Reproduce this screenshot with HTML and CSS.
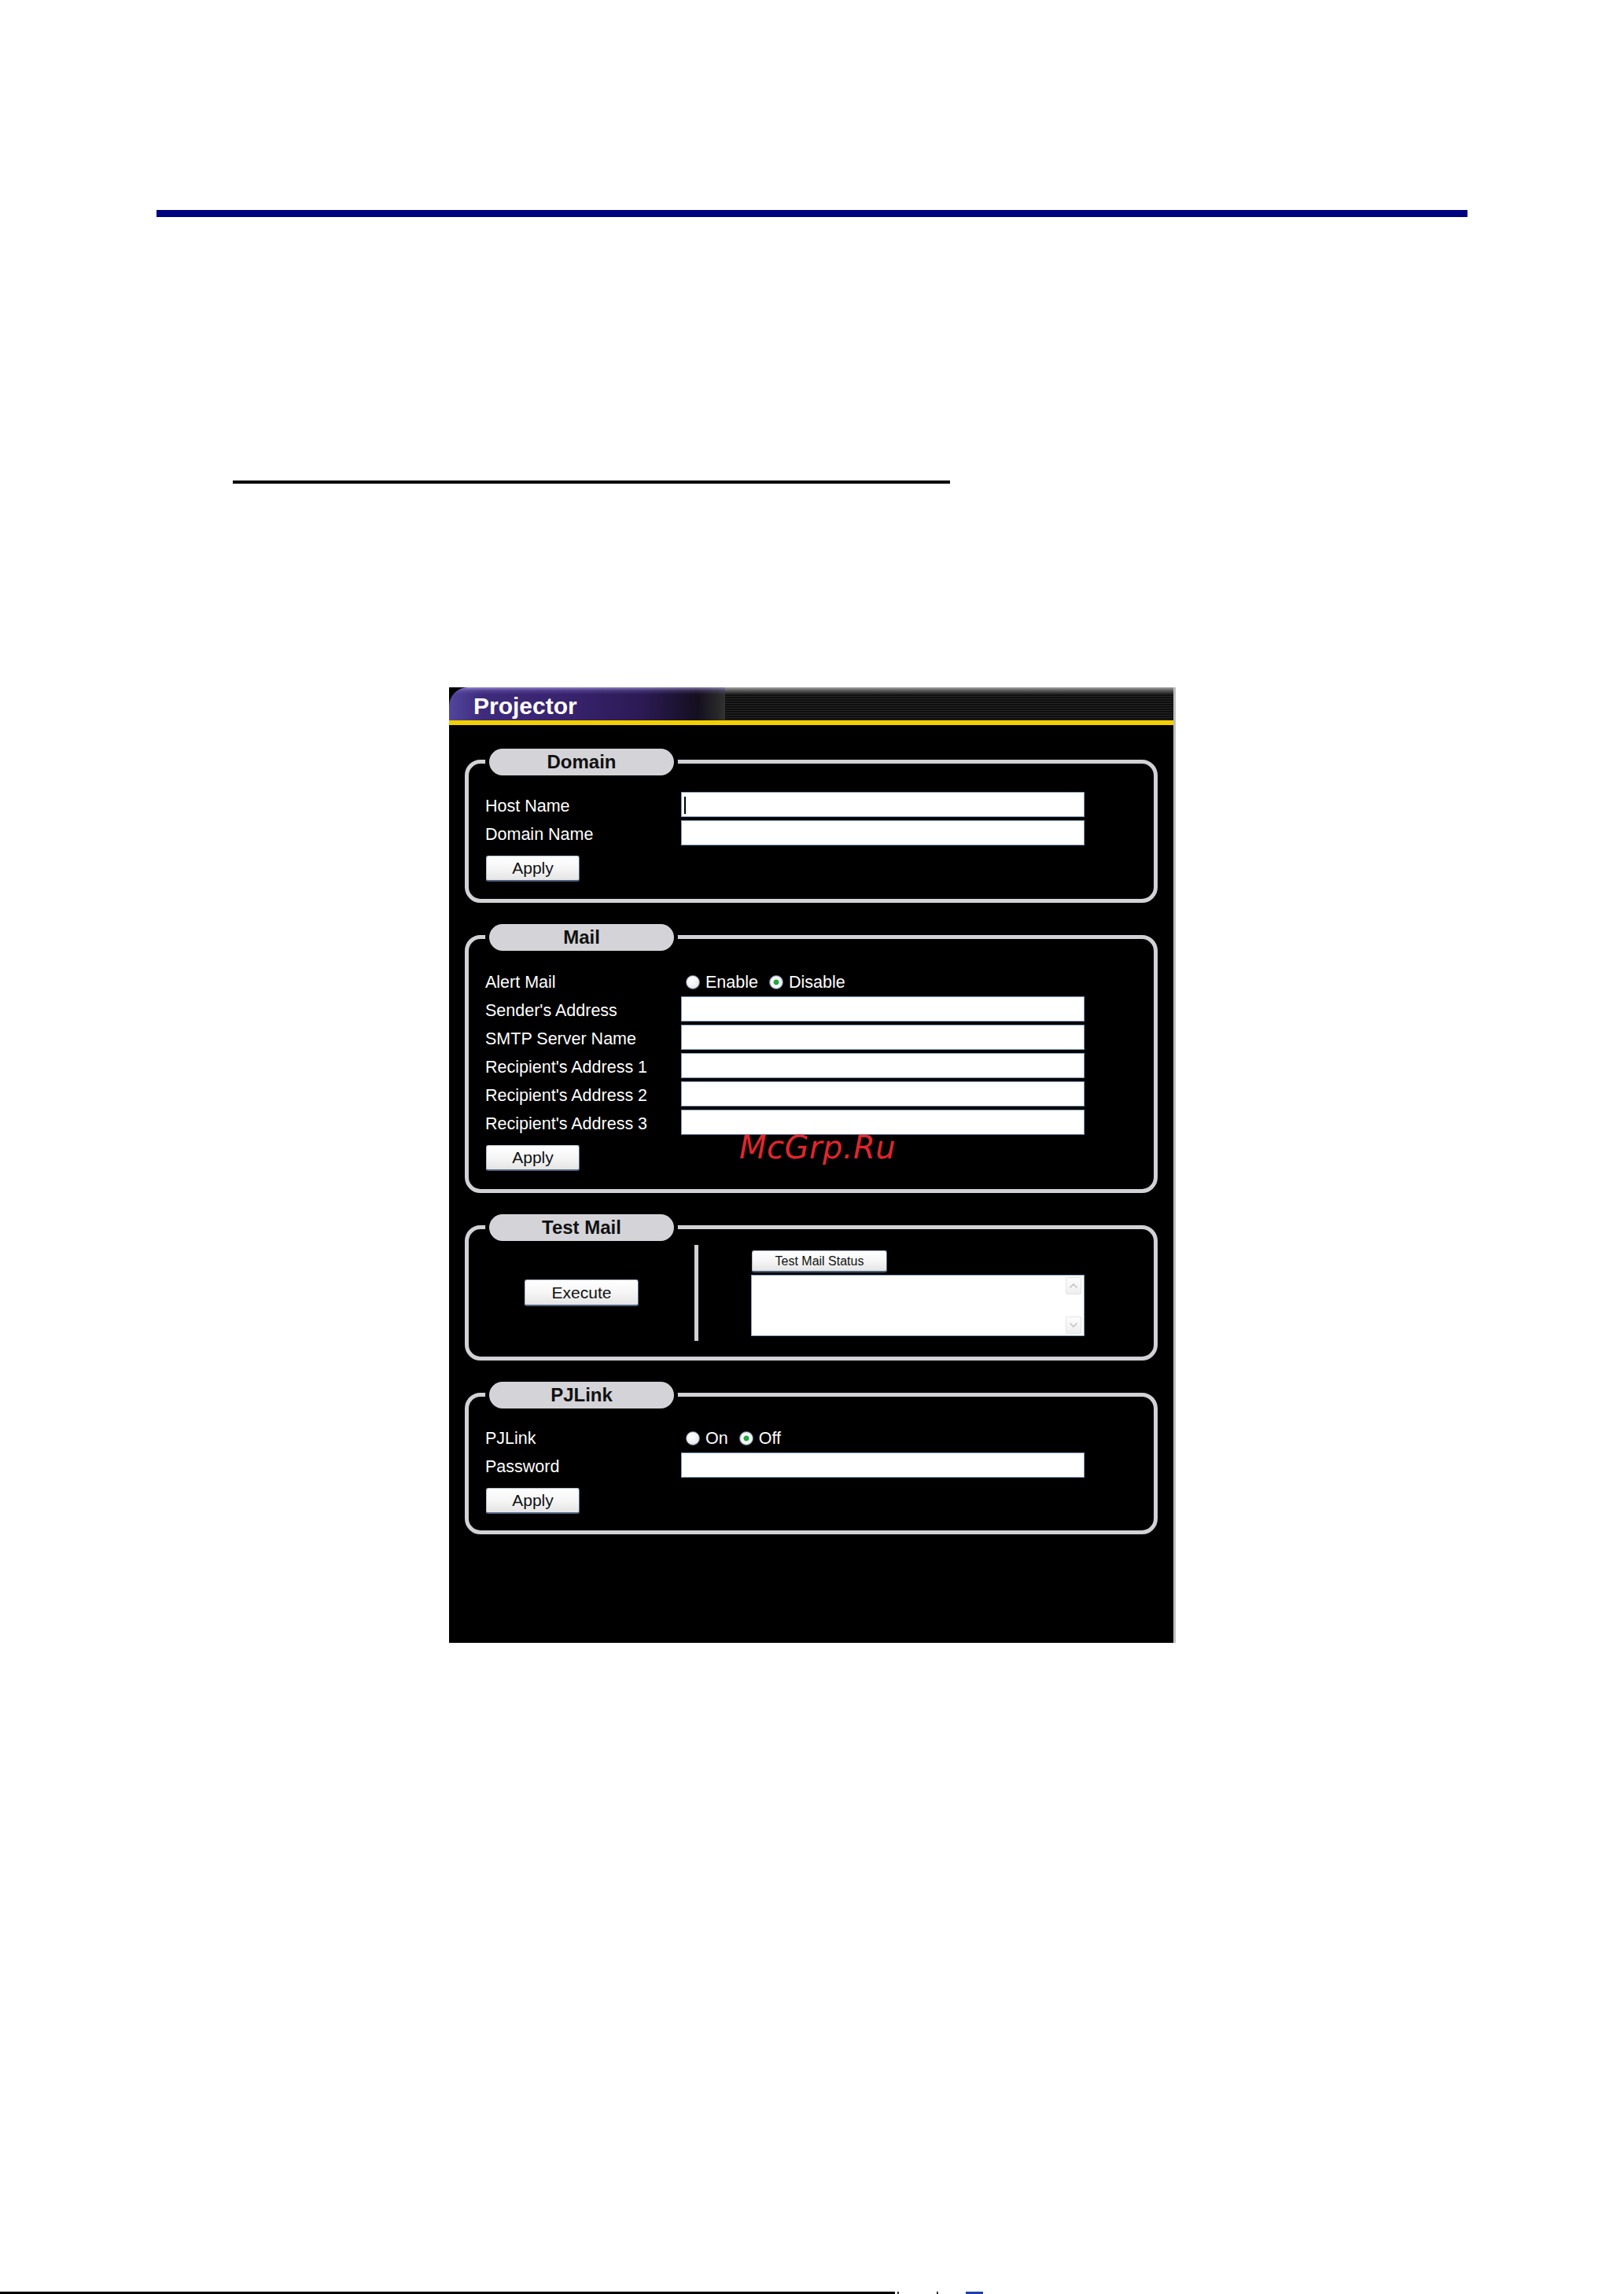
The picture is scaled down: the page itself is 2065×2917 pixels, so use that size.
FILE: index.html
```html
<!DOCTYPE html>
<html lang="en">
<head>
<meta charset="utf-8">
<title>Projector – Network Settings</title>
<link rel="stylesheet" href="styles.css">
</head>
<body>
<div class="page">
  <div class="rule-blue"></div>
  <div class="rule-black"></div>

  <div class="panel">
    <div class="panel-head">
      <div class="head-title">Projector</div>
      <div class="head-stripes"></div>
    </div>
    <div class="head-line"></div>

    <section class="box box-domain">
      <div class="pill">Domain</div>
      <div class="row">
        <label class="lbl">Host Name</label>
        <span class="field-wrap"><input class="field" type="text"><span class="caret"></span></span>
      </div>
      <div class="row">
        <label class="lbl">Domain Name</label>
        <input class="field" type="text">
      </div>
      <button class="btn btn-apply" type="button">Apply</button>
    </section>

    <section class="box box-mail">
      <div class="pill">Mail</div>
      <div class="row">
        <label class="lbl">Alert Mail</label>
        <div class="radios">
          <input class="radio" type="radio" name="alert"><span class="opt">Enable</span>
          <input class="radio" type="radio" name="alert" checked><span class="opt">Disable</span>
        </div>
      </div>
      <div class="row"><label class="lbl">Sender's Address</label><input class="field" type="text"></div>
      <div class="row"><label class="lbl">SMTP Server Name</label><input class="field" type="text"></div>
      <div class="row"><label class="lbl">Recipient's Address 1</label><input class="field" type="text"></div>
      <div class="row"><label class="lbl">Recipient's Address 2</label><input class="field" type="text"></div>
      <div class="row"><label class="lbl">Recipient's Address 3</label><input class="field" type="text"></div>
      <button class="btn btn-apply" type="button">Apply</button>
    </section>

    <section class="box box-test">
      <div class="pill">Test Mail</div>
      <div class="test-left">
        <button class="btn btn-exec" type="button">Execute</button>
      </div>
      <div class="divider"></div>
      <div class="test-right">
        <button class="btn btn-status" type="button">Test Mail Status</button>
        <div class="status-box">
          <div class="sb">
            <span class="sb-btn"><svg width="12" height="8" viewBox="0 0 12 8"><path d="M1.5 6.5 L6 2 L10.5 6.5" fill="none" stroke="#c4c4c4" stroke-width="1.6"/></svg></span>
            <span class="sb-btn"><svg width="12" height="8" viewBox="0 0 12 8"><path d="M1.5 1.5 L6 6 L10.5 1.5" fill="none" stroke="#c4c4c4" stroke-width="1.6"/></svg></span>
          </div>
        </div>
      </div>
    </section>

    <section class="box box-pj">
      <div class="pill">PJLink</div>
      <div class="row">
        <label class="lbl">PJLink</label>
        <div class="radios">
          <input class="radio" type="radio" name="pj"><span class="opt">On</span>
          <input class="radio" type="radio" name="pj" checked><span class="opt">Off</span>
        </div>
      </div>
      <div class="row"><label class="lbl">Password</label><input class="field" type="password"></div>
      <button class="btn btn-apply" type="button">Apply</button>
    </section>

    <div class="watermark">McGrp.Ru</div>
  </div>

  <div class="foot">
    <span class="foot-line"></span>
    <span class="mk mk-a"></span>
    <span class="mk mk-b"></span>
    <span class="mk mk-c"></span>
  </div>
</div>
</body>
</html>
```
FILE: styles.css
```css
* { box-sizing: border-box; }

html, body {
  margin: 0;
  padding: 0;
  background: #fff;
}

body {
  width: 2065px;
  height: 2917px;
  overflow: hidden;
  font-family: "Liberation Sans", Arial, sans-serif;
}

.page {
  padding-top: 267px;
  height: 2917px;
}

.rule-blue {
  margin-left: 199px;
  width: 1667px;
  height: 9px;
  background: #000080;
}

.rule-black {
  margin: 335px 0 0 296px;
  width: 912px;
  height: 4px;
  background: #000;
}

/* ---------- Panel ---------- */
.panel {
  position: relative;
  margin: 259px 0 0 571px;
  width: 924px;
  height: 1215px;
  background: #000;
  border-right: 3px solid #bdbdbd;
  overflow: hidden;
}

.panel-head {
  display: flex;
  height: 42px;
}

.head-title {
  width: 351px;
  padding: 6px 0 0 31px;
  border-top-left-radius: 24px;
  color: #fff;
  font: bold 30px/36px "Liberation Sans", Arial, sans-serif;
  background:
    linear-gradient(to bottom, rgba(205, 195, 255, 0.6) 0, rgba(150, 130, 220, 0.25) 4px, rgba(0, 0, 0, 0) 9px),
    linear-gradient(to right, #51469c 0, #3e2b7c 12%, #37226c 45%, #2b1a54 70%, #140f20 90%, #262628 97%, #333 100%);
}

.head-stripes {
  flex: 1;
  background:
    linear-gradient(to bottom, #a8a8a8 0, #6a6a6a 3px, #262626 8px, rgba(0, 0, 0, 0) 10px),
    repeating-linear-gradient(to bottom, #0e0e0e 0, #0e0e0e 2px, #262626 2px, #262626 3px);
}

.head-line {
  height: 6px;
  background: #f4cf00;
}

/* ---------- Group boxes ---------- */
.box {
  position: relative;
  margin: 41px 20px 0;
  border: 5px solid #d2d2d6;
  border-radius: 20px;
  padding: 36px 0 22px 21px;
}

.box-domain { margin-top: 44px; }
.box-mail { padding-top: 37px; padding-bottom: 23px; }
.box-pj { padding-top: 35px; padding-bottom: 21px; }

.pill {
  position: absolute;
  top: -19px;
  left: 26px;
  width: 235px;
  height: 34px;
  border-radius: 17px;
  background: #d4d4d8;
  box-shadow: 0 0 0 5px #000;
  color: #111;
  text-align: center;
  font: bold 24px/34px "Liberation Sans", Arial, sans-serif;
}

.row {
  display: flex;
  align-items: flex-start;
  height: 36px;
}

.lbl {
  width: 249px;
  flex: none;
  color: #fff;
  font-size: 21.5px;
  line-height: 36px;
  white-space: nowrap;
}

.field {
  display: block;
  width: 513px;
  height: 32px;
  margin: 0;
  padding: 0 4px;
  border: 1px solid #8aa3c3;
  border-bottom-color: #7a93b5;
  background: #fff;
  font-size: 18px;
  outline: none;
}

.field-wrap {
  position: relative;
  display: block;
}

.caret {
  position: absolute;
  left: 4px;
  top: 6px;
  width: 2px;
  height: 22px;
  background: #000;
}

/* ---------- Buttons ---------- */
.btn {
  margin: 0;
  padding: 0;
  color: #111;
  font-family: "Liberation Sans", Arial, sans-serif;
  font-size: 21px;
  background: linear-gradient(to bottom, #ffffff 0, #f6f6f6 50%, #e4e4e4 100%);
  border: 1px solid #b2bccb;
  border-right-color: #5c6e88;
  border-bottom: 2px solid #4b5f7f;
  border-radius: 3px;
}

.btn-apply {
  display: block;
  margin: 9px 0 0 1px;
  width: 119px;
  height: 33px;
}

.btn-exec {
  width: 145px;
  height: 34px;
}

.btn-status {
  display: block;
  margin: 7px 0 0 1px;
  width: 172px;
  height: 28px;
  font-size: 16px;
}

/* ---------- Radios ---------- */
.radios {
  display: flex;
  align-items: center;
  height: 36px;
  padding-left: 6px;
  color: #fff;
  font-size: 21.5px;
}

.radio {
  appearance: none;
  -webkit-appearance: none;
  flex: none;
  width: 18px;
  height: 18px;
  margin: 0 7px 0 0;
  border: 1px solid #6a7a8e;
  border-radius: 50%;
  background: radial-gradient(circle at 40% 35%, #ffffff 0, #f4f4f6 45%, #d2d6de 100%);
}

.radio:checked {
  background: radial-gradient(circle at 50% 50%, #22a844 0, #22a844 3px, #ffffff 4px, #eef0f4 60%, #c9ced8 100%);
}

.opt { margin-right: 14px; }

/* ---------- Test mail ---------- */
.box-test {
  display: flex;
  padding: 20px 0 20px 0;
}

.test-left {
  width: 287px;
  display: flex;
  align-items: center;
  justify-content: center;
}

.divider {
  width: 5px;
  height: 122px;
  background: #d2d2d6;
}

.test-right {
  padding-left: 67px;
}

.status-box {
  display: flex;
  justify-content: flex-end;
  width: 424px;
  height: 78px;
  margin-top: 3px;
  padding: 2px 3px 2px 0;
  border: 1px solid #8aa3c3;
  background: #fff;
}

.sb {
  display: flex;
  flex-direction: column;
  justify-content: space-between;
  width: 20px;
}

.sb-btn {
  display: flex;
  align-items: center;
  justify-content: center;
  height: 22px;
  border: 1px solid #e4e4e4;
  border-radius: 2px;
  background: linear-gradient(to bottom, #fcfcfc, #efefef);
}

/* ---------- Watermark ---------- */
.watermark {
  position: absolute;
  left: 369px;
  top: 565px;
  color: #e0262c;
  font: italic 40px/40px "DejaVu Sans", sans-serif;
  letter-spacing: 0.5px;
}

/* ---------- Footer ---------- */
.foot {
  display: flex;
  align-items: flex-start;
  height: 3px;
  margin-top: 825px;
}

.foot-line {
  width: 1138px;
  height: 3px;
  background: #000;
}

.mk {
  height: 3px;
  background: #1d3fb0;
}

.mk-a { width: 2px; margin-left: 3px; background: #333; }
.mk-b { width: 2px; margin-left: 48px; background: #333; }
.mk-c { width: 22px; margin-left: 35px; }
```
